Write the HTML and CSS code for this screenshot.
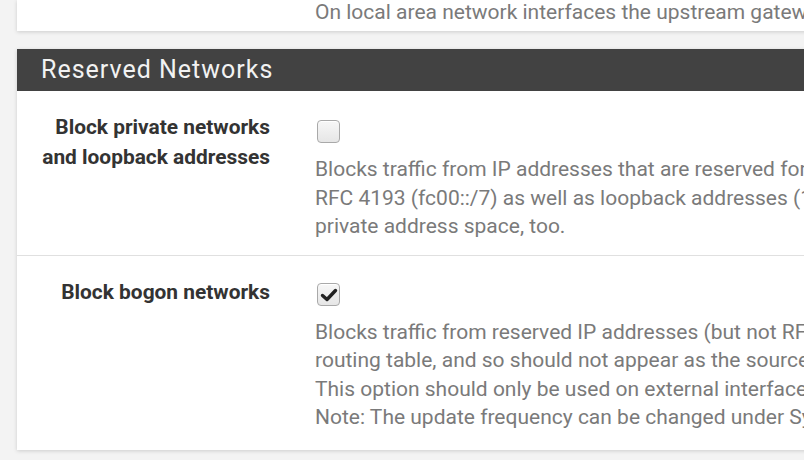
FILE: index.html
```html
<!DOCTYPE html>
<html lang="en">
<head>
<meta charset="utf-8">
<title>Reserved Networks</title>
<link rel="stylesheet" href="styles.css">
</head>
<body>
<div class="wrap">
  <div class="panel panel-top">
    <div class="row row-top">
      <div class="label"></div>
      <div class="content">
        <div class="help">
          <div class="line">On local area network interfaces the upstream gateway should be "none".</div>
        </div>
      </div>
    </div>
  </div>

  <div class="panel panel-main">
    <div class="panel-heading">Reserved Networks</div>
    <div class="panel-body">
      <div class="row row-first">
        <div class="label">Block private networks<br>and loopback addresses</div>
        <div class="content">
          <span class="checkbox"></span>
          <div class="help">
            <div class="line">Blocks traffic from IP addresses that are reserved for</div>
            <div class="line">RFC 4193 (fc00::/7) as well as loopback addresses (127/8).</div>
            <div class="line">private address space, too.</div>
          </div>
        </div>
      </div>
      <div class="row row-last">
        <div class="label">Block bogon networks</div>
        <div class="content">
          <span class="checkbox checked">
            <svg viewBox="0 0 22 22" width="22" height="22" aria-hidden="true"><path d="M4.5 11.5 L9 15.5 L17.5 6.5" fill="none" stroke="#222" stroke-width="3.4" stroke-linecap="round" stroke-linejoin="round"/></svg>
          </span>
          <div class="help">
            <div class="line">Blocks traffic from reserved IP addresses (but not RFC 1918)</div>
            <div class="line">routing table, and so should not appear as the source address</div>
            <div class="line">This option should only be used on external interfaces (WANs)</div>
            <div class="line">Note: The update frequency can be changed under System</div>
          </div>
        </div>
      </div>
    </div>
  </div>
</div>
</body>
</html>
```

FILE: styles.css
```css
html, body {
  margin: 0;
  padding: 0;
}

body {
  background: #f3f3f3;
  font-family: Roboto, "Liberation Sans", Arial, sans-serif;
  overflow: hidden;
  width: 804px;
  height: 460px;
}

.wrap {
  padding-left: 17px;
  width: 1200px;
}

.panel {
  background: #ffffff;
  box-shadow: 0 1px 4px rgba(0, 0, 0, 0.16);
}

.panel-top {
  height: 31px;
  overflow: hidden;
}

.row {
  display: grid;
  grid-template-columns: 253px 1fr;
  column-gap: 45px;
}

.row-top .help {
  margin-top: -2px;
}

.panel-main {
  margin-top: 18px;
}

.panel-heading {
  height: 42px;
  box-sizing: border-box;
  background: #424242;
  color: #f2f2f2;
  font-size: 25px;
  letter-spacing: 1px;
  line-height: 42px;
  padding-left: 24px;
}

.row-first {
  padding: 29px 0 14px;
  border-bottom: 1px solid #e0e0e0;
}

.row-last {
  padding: 27px 0 18px;
}

.label {
  text-align: right;
  font-weight: 700;
  font-size: 20.9px;
  line-height: 30px;
  color: #333333;
}

.row-first .label {
  margin-top: -8px;
}

.row-last .label {
  margin-top: -6px;
}

.content {
  display: flex;
  flex-direction: column;
  align-items: flex-start;
}

.checkbox {
  display: block;
  box-sizing: border-box;
  width: 23px;
  height: 23px;
  margin-left: 2px;
  margin-bottom: 12px;
  border: 1px solid #a9a9a9;
  border-radius: 4px;
  background: linear-gradient(#f7f7f7, #e6e6e6);
  box-shadow: inset 0 1px 0 #ffffff;
  position: relative;
}

.checkbox svg {
  position: absolute;
  left: 0;
  top: 0;
}

.help {
  color: #7a7a7a;
  font-size: 21px;
  line-height: 28.5px;
}

.line {
  white-space: nowrap;
}
```
